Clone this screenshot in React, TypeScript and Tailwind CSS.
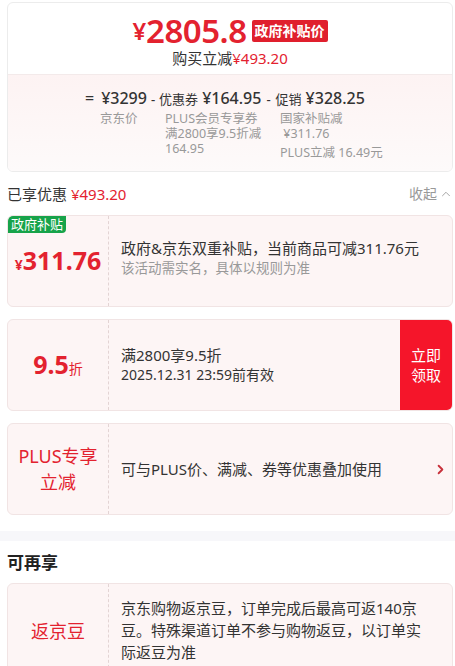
import { ChevronRight, ChevronUp } from 'lucide-react';

const FONT = { fontFamily: '"Noto Sans", "Noto Sans CJK SC", sans-serif' };

function CouponCard({
  left,
  children,
  height = 'h-[92px]',
  badge,
  action,
  bodyClass = 'justify-center pl-[12px] pr-[10px]',
}: {
  left: React.ReactNode;
  children: React.ReactNode;
  height?: string;
  badge?: string;
  action?: React.ReactNode;
  bodyClass?: string;
}) {
  return (
    <div className={`relative flex ${height} rounded-md border border-[#f1e4e4] bg-[#fdf5f5] overflow-hidden`}>
      {badge && (
        <span className="absolute left-0 top-0 rounded-br-[4px] rounded-tl-[4px] bg-[#17a34a] px-[3px] text-[13px] leading-[17px] text-white">
          {badge}
        </span>
      )}
      <div className="flex w-[101px] shrink-0 items-center justify-center border-r border-dashed border-[#e3d4d4]">
        {left}
      </div>
      <div className={`flex flex-1 flex-col ${bodyClass}`}>{children}</div>
      {action}
    </div>
  );
}

export default function App() {
  return (
    <div className="min-h-[666px] w-[455px] bg-white text-[#333]" style={FONT}>
      <div className="pl-[7px] pr-[2px] pt-[2px]">
        {/* Price summary */}
        <div className="overflow-hidden rounded-md border border-[#ececec]">
          <div className="flex h-[71px] flex-col items-center pt-[11px]">
            <div className="flex items-center">
              <span className="text-[24px] font-semibold leading-none text-[#e3222f]">¥</span>
              <span className="text-[33px] font-semibold leading-[34px] tracking-[-0.5px] text-[#e3222f]">2805.8</span>
              <span className="ml-[5px] rounded-[2px] bg-[#e01f2d] px-[3px] text-[14px] font-bold leading-[22px] text-white">
                政府补贴价
              </span>
            </div>
            <div className="mt-[1px] text-[15px] leading-[18px]">
              购买立减<span className="text-[#e3222f]">¥493.20</span>
            </div>
          </div>
          <div className="h-[97px] border-t border-[#f3eaea] bg-gradient-to-b from-[#fdf3f3] to-[#fdfafa] pt-[12px]">
            <div className="flex items-baseline pl-[77px] text-[16px] font-medium leading-[22px] text-[#333]">
              <span className="mr-[7px]">=</span>
              <span>¥3299</span>
              <span className="mx-[4px] text-[13px]">-</span>
              <span className="text-[13px] font-normal">优惠券</span>
              <span className="ml-[4px]">¥164.95</span>
              <span className="mx-[5px] text-[13px]">-</span>
              <span className="text-[13px] font-normal">促销</span>
              <span className="ml-[4px]">¥328.25</span>
            </div>
            <div className="mt-[1px] flex text-[12.5px] leading-[15px] text-[#999]">
              <div className="w-[157px] pl-[92px]">京东价</div>
              <div className="w-[115px]">
                PLUS会员专享券
                <br />
                满2800享9.5折减
                <br />
                164.95
              </div>
              <div>
                国家补贴减
                <br />
                &nbsp;¥311.76
                <div className="mt-[4px]">PLUS立减 16.49元</div>
              </div>
            </div>
          </div>
        </div>

        {/* Enjoyed discounts header */}
        <div className="mt-[12px] flex items-center justify-between text-[15px] leading-[20px]">
          <div>
            已享优惠 <span className="text-[#e3222f]">¥493.20</span>
          </div>
          <div className="flex items-center text-[14px] text-[#999]">
            收起
            <ChevronUp className="ml-[2px] h-[14px] w-[14px]" strokeWidth={1.5} />
          </div>
        </div>

        <div className="mt-[11px] flex flex-col gap-[12px]">
          <CouponCard
            badge="政府补贴"
            left={
              <div className="flex items-baseline font-bold text-[#e3222f]">
                <span className="text-[14px]">¥</span>
                <span className="text-[25px] leading-none">311.76</span>
              </div>
            }
          >
            <div className="text-[15px] leading-[20px]">政府&amp;京东双重补贴，当前商品可减311.76元</div>
            <div className="mt-[1px] pb-[8px] text-[13.5px] leading-[18px] text-[#999]">该活动需实名，具体以规则为准</div>
          </CouponCard>

          <CouponCard
            left={
              <div className="flex items-baseline font-bold text-[#e3222f]">
                <span className="text-[25px] leading-none">9.5</span>
                <span className="text-[14px] font-normal">折</span>
              </div>
            }
            action={
              <div className="flex w-[52px] shrink-0 items-center justify-center bg-[#f5152a] text-center text-[15px] leading-[20px] text-white">
                立即
                <br />
                领取
              </div>
            }
          >
            <div className="text-[15px] leading-[20px]">满2800享9.5折</div>
            <div className="text-[14px] leading-[20px]">2025.12.31 23:59前有效</div>
          </CouponCard>

          <CouponCard
            bodyClass="justify-center pl-[12px] pr-[4px]"
            left={
              <div className="text-center text-[18px] leading-[26px] text-[#e3222f]">
                PLUS专享
                <br />
                立减
              </div>
            }
          >
            <div className="flex items-center justify-between">
              <span className="text-[15px] leading-[20px]">可与PLUS价、满减、券等优惠叠加使用</span>
              <ChevronRight className="h-[15px] w-[15px] text-[#c8323c]" strokeWidth={3} />
            </div>
          </CouponCard>
        </div>
      </div>

      <div className="mt-[16px] h-[10px] bg-[#f7f7fa]" />

      <div className="pl-[7px] pr-[2px]">
        <div className="mt-[11px] text-[17px] font-bold leading-[22px] text-[#222]">可再享</div>
        <div className="mt-[9px]">
          <CouponCard
            height="h-[96px]"
            bodyClass="justify-start pl-[12px] pr-[8px] pt-[13px]"
            left={<div className="text-[18px] text-[#e3222f]">返京豆</div>}
          >
            <div className="text-[15px] leading-[22px]">
              京东购物返京豆，订单完成后最高可返140京
              <br />
              豆。特殊渠道订单不参与购物返豆，以订单实
              <br />
              际返豆为准
            </div>
          </CouponCard>
        </div>
      </div>
    </div>
  );
}
